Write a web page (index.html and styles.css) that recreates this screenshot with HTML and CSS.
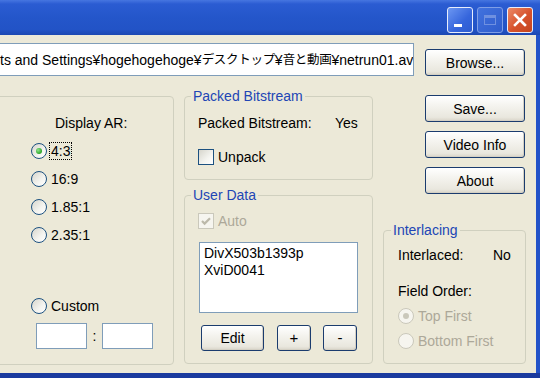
FILE: index.html
```html
<!DOCTYPE html>
<html lang="ja">
<head>
<meta charset="UTF-8" />
<meta name="viewport" content="width=device-width, initial-scale=1" />
<title>Bitstream Info</title>
<link rel="stylesheet" href="styles.css">
</head>
<body>
<div class="window">
  <div class="titlebar">
    <span class="tb-btn tb-min"></span>
    <span class="tb-btn tb-max"><span class="max-box"></span></span>
    <span class="tb-btn tb-close">
      <svg width="14" height="14" viewBox="0 0 14 14"><path d="M2 2L12 12M12 2L2 12" stroke="#fff" stroke-width="2.6" stroke-linecap="square"/></svg>
    </span>
  </div>

  <div class="client">
    <div class="path-row">
      <div class="path-field">ts and Settings¥hogehogehoge¥<span class="jp">デスクトップ</span>¥<span class="jp">音と動画</span>¥netrun01.av</div>
      <button class="btn btn-browse">Browse...</button>
    </div>

    <div class="main">
      <!-- aspect ratio -->
      <div class="group group-ar">
        <div class="ar-title">Display AR:</div>
        <label class="radio-row"><span class="radio checked"></span><span class="focus">4:3</span></label>
        <label class="radio-row"><span class="radio"></span>16:9</label>
        <label class="radio-row"><span class="radio"></span>1.85:1</label>
        <label class="radio-row"><span class="radio"></span>2.35:1</label>
        <label class="radio-row custom"><span class="radio"></span>Custom</label>
        <div class="custom-inputs">
          <span class="box"></span>
          <span class="colon">:</span>
          <span class="box"></span>
        </div>
      </div>

      <div class="col-mid">
        <div class="group group-packed">
          <div class="legend">Packed Bitstream</div>
          <div class="kv"><span class="k k-packed">Packed Bitstream:</span><span>Yes</span></div>
          <label class="check-row"><span class="check"></span>Unpack</label>
        </div>

        <div class="group group-user">
          <div class="legend">User Data</div>
          <label class="check-row disabled">
            <span class="check checked">
              <svg width="12" height="12" viewBox="0 0 12 12"><path d="M2 6l2.6 2.6L10 3.2" fill="none" stroke="#bcb9aa" stroke-width="2.2"/></svg>
            </span>Auto
          </label>
          <div class="listbox">
            <div>DivX503b1393p</div>
            <div>XviD0041</div>
          </div>
          <div class="btn-row">
            <button class="btn btn-edit">Edit</button>
            <button class="btn btn-sm btn-plus">+</button>
            <button class="btn btn-sm btn-minus">-</button>
          </div>
        </div>
      </div>

      <div class="col-right">
        <button class="btn btn-side first">Save...</button>
        <button class="btn btn-side">Video Info</button>
        <button class="btn btn-side">About</button>

        <div class="group group-inter">
          <div class="legend">Interlacing</div>
          <div class="kv"><span class="k k-inter">Interlaced:</span><span>No</span></div>
          <div class="field-order">Field Order:</div>
          <label class="radio-row disabled"><span class="radio checked"></span>Top First</label>
          <label class="radio-row disabled"><span class="radio"></span>Bottom First</label>
        </div>
      </div>
    </div>
  </div>
</div>
</body>
</html>
```

FILE: styles.css
```css
body {
  margin: 0;
  font-family: "Liberation Sans", "Noto Sans CJK JP", sans-serif;
  font-size: 14px;
  line-height: 16px;
  color: #000;
  background: #1f4fc4;
  overflow: hidden;
}
.window {
  width: 540px;
  height: 378px;
  display: flex;
  flex-direction: column;
  background: linear-gradient(to bottom, #2252c8 0, #2252c8 373px, #1a3a9e 373px);
}

/* title bar */
.titlebar {
  flex: none;
  height: 35px;
  box-sizing: border-box;
  padding: 7px 7px 0 0;
  display: flex;
  justify-content: flex-end;
  align-items: flex-start;
  gap: 4px;
  background: linear-gradient(to bottom, #4676e0 0, #2b5cd2 4px, #2456ca 50%, #2253c6 85%, #1c48b2 100%);
}
.tb-btn {
  width: 26px;
  height: 26px;
  box-sizing: border-box;
  border: 1px solid #e8eefc;
  border-radius: 3px;
  display: flex;
}
.tb-min {
  background: linear-gradient(135deg, #6c97f2, #3565dc 60%, #2e5cd0);
  align-items: flex-end;
  padding: 0 0 5px 6px;
}
.tb-min::after {
  content: "";
  width: 8px;
  height: 3px;
  background: #fff;
}
.tb-max {
  border-color: #7f9ee6;
  background: linear-gradient(135deg, #4272de, #2f5ccc);
  align-items: center;
  justify-content: center;
}
.max-box {
  width: 12px;
  height: 10px;
  box-sizing: border-box;
  border: 1px solid #6f90e0;
  border-top-width: 3px;
}
.tb-close {
  background: linear-gradient(135deg, #ec8a68, #d6522c 55%, #c4441e);
  align-items: center;
  justify-content: center;
}

/* client area */
.client {
  flex: none;
  width: 536px;
  height: 338px;
  background: #ece9d8;
}
.path-row {
  display: flex;
  align-items: flex-start;
  padding-top: 8px;
}
.path-field {
  margin-left: -20px;
  width: 434px;
  height: 33px;
  box-sizing: border-box;
  border: 1px solid #7f9db9;
  background: #fff;
  padding-left: 19px;
  display: flex;
  align-items: center;
  white-space: pre;
  overflow: hidden;
}
.jp {
  font-size: 12.5px;
  letter-spacing: -0.3px;
}
.btn {
  font-family: inherit;
  font-size: 14px;
  line-height: 16px;
  color: #000;
  padding: 0;
  box-sizing: border-box;
  border: 1px solid #1b3c6e;
  border-radius: 3px;
  background: linear-gradient(to bottom, #ffffff 0, #f4f3ee 40%, #e9e7de 85%, #d8d4c8 100%);
  box-shadow: inset -1px -1px 0 #d4d0c4;
}
.btn-browse {
  margin: 6px 0 0 11px;
  width: 100px;
  height: 27px;
}

.main {
  display: flex;
  align-items: flex-start;
  margin-top: 20px;
}
.group {
  border: 1px solid #d0d0bf;
  border-radius: 4px;
  box-sizing: border-box;
}
.legend {
  width: fit-content;
  margin: -9px 0 0 -7px;
  padding: 0 2px;
  background: #ece9d8;
  color: #2145b5;
}

/* display AR */
.group-ar {
  margin-left: -20px;
  width: 194px;
  height: 269px;
  padding: 18px 0 0 50px;
}
.ar-title {
  margin-left: 24px;
}
.radio-row {
  display: flex;
  align-items: center;
  gap: 4px;
  height: 16px;
  margin-top: 12px;
}
.radio-row.custom {
  margin-top: 55px;
}
.radio {
  flex: none;
  width: 16px;
  height: 16px;
  box-sizing: border-box;
  border: 1px solid #1c5180;
  border-radius: 50%;
  background: linear-gradient(135deg, #d6d5cc, #f4f4f0 60%, #fff);
  display: flex;
  align-items: center;
  justify-content: center;
}
.radio.checked::after {
  content: "";
  width: 6px;
  height: 6px;
  border-radius: 50%;
  background: radial-gradient(circle at 35% 35%, #8ee58b, #2ca42a 70%);
}
.focus {
  outline: 1px dotted #000;
  padding: 0 1px;
  margin-left: -1px;
}
.custom-inputs {
  display: flex;
  align-items: center;
  margin: 9px 0 0 5px;
}
.box {
  width: 51px;
  height: 26px;
  box-sizing: border-box;
  border: 1px solid #7f9db9;
  background: #fff;
}
.colon {
  width: 15px;
  text-align: center;
}

/* middle column */
.col-mid {
  margin-left: 10px;
  width: 189px;
}
.group-packed {
  height: 84px;
  padding-left: 13px;
}
.kv {
  display: flex;
  margin-top: 11px;
}
.k-packed {
  width: 137px;
}
.check-row {
  display: flex;
  align-items: center;
  gap: 4px;
  height: 16px;
  margin-top: 18px;
}
.check {
  flex: none;
  width: 16px;
  height: 16px;
  box-sizing: border-box;
  border: 1px solid #1c5180;
  background: linear-gradient(135deg, #d6d5cc, #f4f4f0 60%, #fff);
  display: flex;
  align-items: center;
  justify-content: center;
}
.disabled {
  color: #aca899;
}
.disabled .check,
.disabled .radio {
  border-color: #cac8bb;
  background: #f6f5ef;
}
.disabled .radio.checked::after {
  background: #cac8bb;
}
.group-user {
  margin-top: 15px;
  height: 169px;
  padding-left: 13px;
}
.group-user .check-row {
  margin-top: 10px;
}
.listbox {
  margin: 13px 0 0 1px;
  width: 159px;
  height: 71px;
  box-sizing: border-box;
  border: 1px solid #7f9db9;
  background: #fff;
  padding: 2px 0 0 4px;
  line-height: 17px;
}
.btn-row {
  display: flex;
  margin: 12px 0 0 3px;
}
.btn-edit {
  width: 63px;
  height: 26px;
}
.btn-sm {
  width: 34px;
  height: 26px;
  font-size: 15px;
}
.btn-plus {
  margin-left: 13px;
}
.btn-minus {
  margin-left: 12px;
}

/* right column */
.col-right {
  margin-left: 10px;
  width: 143px;
}
.btn-side {
  display: block;
  margin: 9px 0 0 42px;
  width: 100px;
  height: 27px;
}
.btn-side.first {
  margin-top: -1px;
}
.group-inter {
  margin-top: 36px;
  height: 134px;
  padding-left: 14px;
}
.group-inter .kv {
  margin-top: 9px;
}
.k-inter {
  width: 95px;
}
.field-order {
  margin-top: 20px;
}
.group-inter .radio-row {
  margin-top: 9px;
}
```
